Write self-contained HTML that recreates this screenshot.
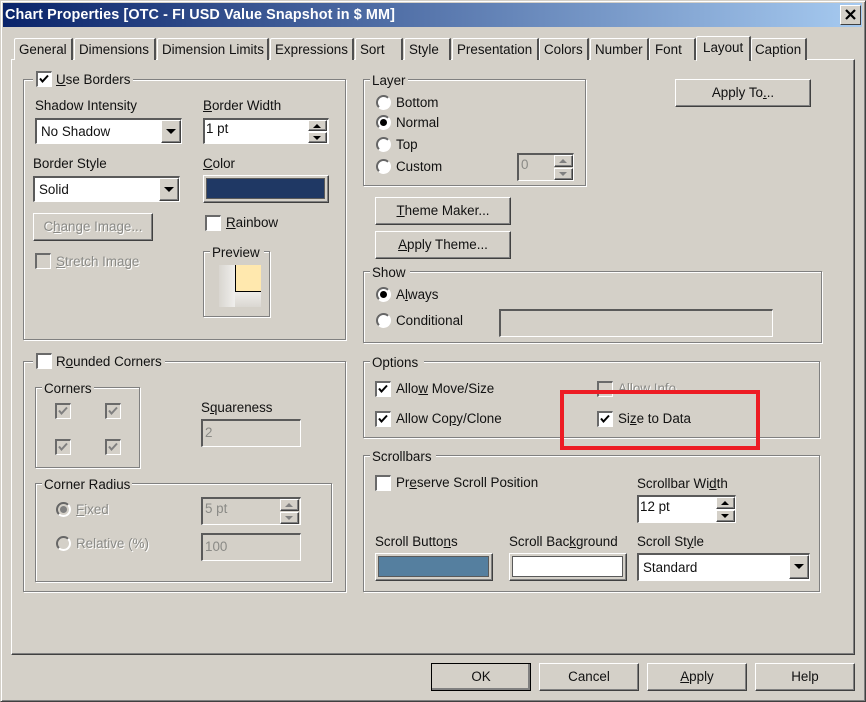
<!DOCTYPE html>
<html><head><meta charset="utf-8"><style>
html,body{margin:0;padding:0;background:#d4d0c8}
#w{position:relative;width:866px;height:702px;overflow:hidden;background:#d4d0c8;font:13.4px/16px "Liberation Sans",sans-serif;color:#111}
#w div,#w span.a{position:absolute;box-sizing:border-box}
.t{position:absolute;white-space:nowrap;height:16px;margin-top:1px}
.d{color:#8a8a86;text-shadow:1px 1px 0 #fff}
.g{border:1px solid #808080;box-shadow:1px 1px 0 #fff,inset 1px 1px 0 #fff}
.l{background:#d4d0c8;padding:0 2px;white-space:nowrap;height:16px;margin-top:1px}
.b{background:#d4d0c8;border:1px solid;border-color:#fff #404040 #404040 #fff;box-shadow:inset -1px -1px 0 #808080;text-align:center;line-height:25px;white-space:nowrap}
.s{background:#fff;border-style:solid;border-width:2px 1px 1px 2px;border-color:#5a5a5a #fff #fff #5a5a5a;white-space:nowrap;padding:0 0 0 2px;line-height:17px}
.n{background:#d4d0c8;color:#8a8a86}
.c{width:16px;height:16px;background:#fff;border-style:solid;border-width:2px 1px 1px 2px;border-color:#6a6a6a #fff #fff #6a6a6a}
.cd{background:#d4d0c8}
.r{width:15px;height:15px;border-radius:50%;background:#fff;border:2px solid;border-color:#666 #fff #fff #666}
.rd{background:#d4d0c8}
.dot{left:2px;top:2px;width:7px;height:7px;border-radius:50%;background:#000}
.ar{width:0;height:0;border-left:5px solid transparent;border-right:5px solid transparent;border-top:5px solid #000}
.tab{top:38px;height:22px;background:#d4d0c8;border-left:1px solid #fff;border-top:1px solid #fff;border-right:2px solid #505050;border-top-left-radius:2px;white-space:nowrap;padding:2px 0 0 4px;line-height:17px}
svg{position:absolute;left:0;top:0}
</style></head><body><div id="w">

<div style="left:0;top:0;width:866px;height:702px;border:1px solid;border-color:#d4d0c8 #404040 #404040 #d4d0c8;box-shadow:inset 1px 1px 0 #fff,inset -1px -1px 0 #808080"></div>
<div style="left:3px;top:3px;width:859px;height:24px;background:linear-gradient(90deg,#0a246a,#a6caf0)"></div>
<div class="t" style="left:5px;top:6px;color:#fff;font-weight:bold;font-size:14.4px;letter-spacing:.1px">Chart Properties [OTC - FI USD Value Snapshot in $ MM]</div>
<div style="left:840px;top:5px;width:21px;height:20px;background:#d4d0c8;border:1px solid;border-color:#fff #404040 #404040 #fff"><svg width="19" height="18"><path d="M5 4L14 13M14 4L5 13" stroke="#000" stroke-width="2.2" fill="none"/></svg></div>

<div style="left:11px;top:59px;width:844px;height:596px;border:1px solid;border-color:#fff #404040 #404040 #fff;box-shadow:inset -1px -1px 0 #808080"></div>

<div class="tab" style="left:14px;width:59px">General</div>
<div class="tab" style="left:74px;width:82px">Dimensions</div>
<div class="tab" style="left:157px;width:112px">Dimension Limits</div>
<div class="tab" style="left:270px;width:84px">Expressions</div>
<div class="tab" style="left:355px;width:48px">Sort</div>
<div class="tab" style="left:404px;width:47px">Style</div>
<div class="tab" style="left:452px;width:87px">Presentation</div>
<div class="tab" style="left:539px;width:50px">Colors</div>
<div class="tab" style="left:590px;width:59px">Number</div>
<div class="tab" style="left:649px;width:47px;padding-left:5px">Font</div>
<div class="tab" style="left:696px;top:36px;width:55px;height:25px;padding:2px 0 0 6px;z-index:2;border-bottom:0">Layout</div>
<div class="tab" style="left:751px;width:56px;padding-left:3px">Caption</div>

<!-- Use Borders -->
<div class="g" style="left:23px;top:79px;width:323px;height:261px"></div>
<div class="l" style="left:33px;top:70px;width:100px"></div>
<div class="c" style="left:36px;top:71px"><svg width="13" height="13"><path d="M2 5.5L4.5 8.5L10 2.5" stroke="#000" stroke-width="2" fill="none"/></svg></div>
<div class="t" style="left:56px;top:71px"><u>U</u>se Borders</div>
<div class="t" style="left:35px;top:97px">Shadow Intensity</div>
<div class="s" style="left:35px;top:118px;width:147px;height:26px;padding:3px 0 0 4px">No Shadow</div>
<div class="b" style="left:161px;top:120px;width:20px;height:23px"><div class="ar" style="left:4px;top:8px"></div></div>
<div class="t" style="left:203px;top:97px"><u>B</u>order Width</div>
<div class="s" style="left:203px;top:118px;width:126px;height:26px;padding:0 0 0 1px">1 pt</div>
<div class="b" style="left:308px;top:120px;width:19px;height:11px"><div class="ar" style="left:4px;top:3px;border-top:0;border-left-width:4px;border-right-width:4px;border-bottom:4px solid #000"></div></div>
<div class="b" style="left:308px;top:132px;width:19px;height:11px"><div class="ar" style="left:4px;top:3px;border-left-width:4px;border-right-width:4px;border-top-width:4px"></div></div>

<div class="t" style="left:33px;top:155px">Border Style</div>
<div class="s" style="left:33px;top:176px;width:147px;height:26px;padding:3px 0 0 4px">Solid</div>
<div class="b" style="left:159px;top:178px;width:20px;height:23px"><div class="ar" style="left:4px;top:8px"></div></div>
<div class="t" style="left:203px;top:155px"><u>C</u>olor</div>
<div class="b" style="left:203px;top:175px;width:126px;height:28px"><div style="left:2px;top:2px;width:119px;height:21px;background:#1f3864;border:1px solid #5a5a5a"></div></div>
<div class="b d" style="left:33px;top:213px;width:120px;height:28px">C<u>h</u>ange Image...</div>
<div class="c cd" style="left:35px;top:253px"></div>
<div class="t d" style="left:56px;top:253px"><u>S</u>tretch Image</div>
<div class="c" style="left:205px;top:215px"></div>
<div class="t" style="left:226px;top:214px"><u>R</u>ainbow</div>
<div class="g" style="left:203px;top:251px;width:67px;height:66px"></div>
<div class="l" style="left:210px;top:243px;width:54px"></div>
<div class="t" style="left:212px;top:244px">Preview</div>
<div style="left:219px;top:265px;width:16px;height:42px;background:linear-gradient(90deg,#d9d6d0,#efeeec)"></div>
<div style="left:235px;top:291px;width:26px;height:16px;background:linear-gradient(180deg,#f0efed,#dad7d1)"></div>
<div style="left:235px;top:265px;width:26px;height:27px;background:#ffe8ae;border-left:1px solid #000;border-bottom:1px solid #000"></div>

<!-- Rounded Corners -->
<div class="g" style="left:23px;top:361px;width:323px;height:231px"></div>
<div class="l" style="left:33px;top:352px;width:132px"></div>
<div class="c" style="left:36px;top:353px"></div>
<div class="t" style="left:56px;top:353px">R<u>o</u>unded Corners</div>
<div class="g" style="left:35px;top:387px;width:105px;height:81px"></div>
<div class="l" style="left:42px;top:380px;width:52px">Corners</div>
<div class="c cd" style="left:55px;top:403px"><svg width="13" height="13"><path d="M2 5.5L4.5 8.5L10 2.5" stroke="#808080" stroke-width="2" fill="none"/></svg></div>
<div class="c cd" style="left:105px;top:403px"><svg width="13" height="13"><path d="M2 5.5L4.5 8.5L10 2.5" stroke="#808080" stroke-width="2" fill="none"/></svg></div>
<div class="c cd" style="left:55px;top:439px"><svg width="13" height="13"><path d="M2 5.5L4.5 8.5L10 2.5" stroke="#808080" stroke-width="2" fill="none"/></svg></div>
<div class="c cd" style="left:105px;top:439px"><svg width="13" height="13"><path d="M2 5.5L4.5 8.5L10 2.5" stroke="#808080" stroke-width="2" fill="none"/></svg></div>
<div class="t" style="left:201px;top:399px">S<u>q</u>uareness</div>
<div class="s n" style="left:201px;top:419px;width:100px;height:28px;padding-top:3px">2</div>
<div class="g" style="left:35px;top:483px;width:297px;height:99px"></div>
<div class="l" style="left:42px;top:476px;width:90px">Corner Radius</div>
<div class="r rd" style="left:56px;top:502px"><div class="dot" style="background:#808080"></div></div>
<div class="t d" style="left:76px;top:501px"><u>F</u>ixed</div>
<div class="s n" style="left:201px;top:497px;width:100px;height:28px;padding-top:1px">5 pt</div>
<div class="b" style="left:280px;top:499px;width:19px;height:12px"><div class="ar" style="left:4px;top:3px;border-top:0;border-left-width:4px;border-right-width:4px;border-bottom:4px solid #808080"></div></div>
<div class="b" style="left:280px;top:512px;width:19px;height:12px"><div class="ar" style="left:4px;top:3px;border-left-width:4px;border-right-width:4px;border-top:4px solid #808080"></div></div>
<div class="r rd" style="left:56px;top:536px"></div>
<div class="t d" style="left:76px;top:535px">Relative (%)</div>
<div class="s n" style="left:201px;top:533px;width:100px;height:28px;padding-top:3px">100</div>

<!-- Layer -->
<div class="g" style="left:363px;top:79px;width:223px;height:107px"></div>
<div class="l" style="left:370px;top:72px;width:38px">Layer</div>
<div class="r" style="left:376px;top:95px"></div><div class="t" style="left:396px;top:94px">Bottom</div>
<div class="r" style="left:376px;top:115px"><div class="dot"></div></div><div class="t" style="left:396px;top:114px">Normal</div>
<div class="r" style="left:376px;top:137px"></div><div class="t" style="left:396px;top:136px">Top</div>
<div class="r" style="left:376px;top:159px"></div><div class="t" style="left:396px;top:158px">Custom</div>
<div class="s n" style="left:517px;top:153px;width:57px;height:28px;padding-top:1px">0</div>
<div class="b" style="left:554px;top:155px;width:19px;height:12px"><div class="ar" style="left:4px;top:3px;border-top:0;border-left-width:4px;border-right-width:4px;border-bottom:4px solid #808080"></div></div>
<div class="b" style="left:554px;top:168px;width:19px;height:12px"><div class="ar" style="left:4px;top:3px;border-left-width:4px;border-right-width:4px;border-top:4px solid #808080"></div></div>

<div class="b" style="left:375px;top:197px;width:136px;height:28px"><u>T</u>heme Maker...</div>
<div class="b" style="left:375px;top:231px;width:136px;height:28px"><u>A</u>pply Theme...</div>
<div class="b" style="left:675px;top:79px;width:136px;height:28px">Apply To<u>.</u>..</div>

<!-- Show -->
<div class="g" style="left:363px;top:271px;width:459px;height:72px"></div>
<div class="l" style="left:370px;top:264px;width:40px">Show</div>
<div class="r" style="left:376px;top:287px"><div class="dot"></div></div><div class="t" style="left:396px;top:286px">A<u>l</u>ways</div>
<div class="r" style="left:376px;top:313px"></div><div class="t" style="left:396px;top:312px">Conditional</div>
<div class="s n" style="left:499px;top:309px;width:274px;height:28px"></div>

<!-- Options -->
<div class="g" style="left:363px;top:361px;width:457px;height:77px"></div>
<div class="l" style="left:370px;top:354px;width:54px">Options</div>
<div class="c" style="left:375px;top:381px"><svg width="13" height="13"><path d="M2 5.5L4.5 8.5L10 2.5" stroke="#000" stroke-width="2" fill="none"/></svg></div>
<div class="t" style="left:396px;top:380px">Allo<u>w</u> Move/Size</div>
<div class="c" style="left:375px;top:411px"><svg width="13" height="13"><path d="M2 5.5L4.5 8.5L10 2.5" stroke="#000" stroke-width="2" fill="none"/></svg></div>
<div class="t" style="left:396px;top:410px">Allow Co<u>p</u>y/Clone</div>
<div class="c cd" style="left:597px;top:381px"></div>
<div class="t d" style="left:618px;top:380px">Allow Info</div>
<div class="c" style="left:597px;top:411px"><svg width="13" height="13"><path d="M2 5.5L4.5 8.5L10 2.5" stroke="#000" stroke-width="2" fill="none"/></svg></div>
<div class="t" style="left:618px;top:410px">Si<u>z</u>e to Data</div>

<!-- Scrollbars -->
<div class="g" style="left:363px;top:455px;width:457px;height:137px"></div>
<div class="l" style="left:370px;top:448px;width:66px">Scrollbars</div>
<div class="c" style="left:375px;top:475px"></div>
<div class="t" style="left:396px;top:474px">Pr<u>e</u>serve Scroll Position</div>
<div class="t" style="left:637px;top:475px">Scrollbar Wi<u>d</u>th</div>
<div class="s" style="left:637px;top:495px;width:99px;height:28px;padding:1px 0 0 1px">12 pt</div>
<div class="b" style="left:716px;top:497px;width:19px;height:12px"><div class="ar" style="left:4px;top:3px;border-top:0;border-left-width:4px;border-right-width:4px;border-bottom:4px solid #000"></div></div>
<div class="b" style="left:716px;top:510px;width:19px;height:12px"><div class="ar" style="left:4px;top:3px;border-left-width:4px;border-right-width:4px;border-top-width:4px"></div></div>
<div class="t" style="left:375px;top:533px">Scroll Butto<u>n</u>s</div>
<div class="b" style="left:375px;top:553px;width:118px;height:28px"><div style="left:2px;top:2px;width:111px;height:21px;background:#557f9f;border:1px solid #5a5a5a"></div></div>
<div class="t" style="left:509px;top:533px">Scroll Bac<u>k</u>ground</div>
<div class="b" style="left:509px;top:553px;width:118px;height:28px"><div style="left:2px;top:2px;width:111px;height:21px;background:#fff;border:1px solid #5a5a5a"></div></div>
<div class="t" style="left:637px;top:533px">Scroll St<u>y</u>le</div>
<div class="s" style="left:637px;top:553px;width:173px;height:28px;padding:4px 0 0 4px">Standard</div>
<div class="b" style="left:789px;top:555px;width:20px;height:24px"><div class="ar" style="left:4px;top:8px"></div></div>

<!-- Red box -->
<div style="left:560px;top:390px;width:200px;height:60px;border:4px solid #ed1c24;z-index:3"></div>

<!-- Bottom -->
<div class="b" style="left:431px;top:663px;width:100px;height:28px;outline:1px solid #000;outline-offset:-1px;border-right-color:#000;border-bottom-color:#000;box-shadow:inset -2px -2px 0 #808080">OK</div>
<div class="b" style="left:539px;top:663px;width:100px;height:28px">Cancel</div>
<div class="b" style="left:647px;top:663px;width:100px;height:28px"><u>A</u>pply</div>
<div class="b" style="left:755px;top:663px;width:100px;height:28px">Help</div>
</div></body></html>
